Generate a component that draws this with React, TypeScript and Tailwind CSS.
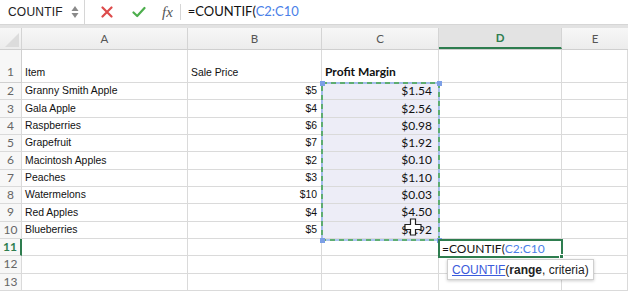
import React from 'react';

const arial = { fontFamily: '"Liberation Sans", Arial, sans-serif' };
const calibri = { fontFamily: 'Lato, "Open Sans", sans-serif' };

const data: [string, string, string][] = [
  ['Granny Smith Apple', '$5', '$1.54'],
  ['Gala Apple', '$4', '$2.56'],
  ['Raspberries', '$6', '$0.98'],
  ['Grapefruit', '$7', '$1.92'],
  ['Macintosh Apples', '$2', '$0.10'],
  ['Peaches', '$3', '$1.10'],
  ['Watermelons', '$10', '$0.03'],
  ['Red Apples', '$4', '$4.50'],
  ['Blueberries', '$5', '$3.92'],
];

const cell = 'h-full shrink-0 border-r border-b border-[#dadada] flex items-center';

function FormulaBar() {
  return (
    <div className="h-[25px] flex items-center bg-white border-b border-[#d6d6d6]">
      <div className="w-[85px] h-full shrink-0 flex items-center border-r border-[#d6d6d6] pl-[8px]">
        <span className="text-[12px] text-[#222] tracking-[0.2px]" style={arial}>COUNTIF</span>
        <svg className="ml-auto mr-[5px] shrink-0" width="8" height="14" viewBox="0 0 8 14">
          <path d="M4 1 L7.5 6 L0.5 6 Z" fill="#8a8a8a" />
          <path d="M4 13 L7.5 8 L0.5 8 Z" fill="#8a8a8a" />
        </svg>
      </div>
      <div className="flex items-center pl-[16px]">
        <svg className="shrink-0" width="12" height="12" viewBox="0 0 12 12">
          <path d="M1.5 1.5 L10.5 10.5 M10.5 1.5 L1.5 10.5" stroke="#dd4b4b" strokeWidth="2.2" strokeLinecap="round" />
        </svg>
        <svg className="ml-[19px] shrink-0" width="14" height="12" viewBox="0 0 14 12">
          <path d="M1.5 6.5 L5.2 10 L12.5 2" stroke="#4cae4c" strokeWidth="2.2" fill="none" strokeLinecap="round" strokeLinejoin="round" />
        </svg>
        <span className="ml-[16px] text-[15px] italic text-[#555]" style={{ fontFamily: '"Liberation Serif", serif' }}>fx</span>
        <div className="ml-[7px] w-px h-[16px] bg-[#d6d6d6]" />
        <span className="ml-[7px] text-[13px] text-[#111]" style={calibri}>
          =COUNTIF(<span className="text-[#4a7fe8]">C2:C10</span>
        </span>
      </div>
    </div>
  );
}

function Header() {
  const cols = [
    { l: 'A', w: 'w-[166px]' },
    { l: 'B', w: 'w-[134px]' },
    { l: 'C', w: 'w-[117px]' },
  ];
  return (
    <div className="h-[22px] flex bg-gradient-to-b from-[#f7f7f7] to-[#ececec] border-b border-[#cfcfcf] text-[11.5px] text-[#555]" style={calibri}>
      <div className="w-[22px] h-full shrink-0 border-r border-[#d4d4d4] relative">
        <svg className="absolute right-[2px] bottom-[2px]" width="14" height="14" viewBox="0 0 14 14">
          <path d="M14 0 L14 14 L0 14 Z" fill="#dcdcdc" />
        </svg>
      </div>
      {cols.map((c) => (
        <div key={c.l} className={`${c.w} h-full shrink-0 border-r border-[#d4d4d4] flex items-center justify-center`}>
          {c.l}
        </div>
      ))}
      <div className="w-[123px] h-full shrink-0 border-r border-[#d4d4d4] border-b-2 border-b-[#2e7d4f] bg-[#e3e3e3] flex items-center justify-center text-[#2e7d4f] font-bold">
        D
      </div>
      <div className="flex-1 h-full flex items-center justify-center">E</div>
    </div>
  );
}

function RowNum({ n, active }: { n: number; active?: boolean }) {
  return (
    <div
      className={`w-[22px] h-full shrink-0 border-b border-[#dadada] flex items-center justify-center bg-[#f7f7f7] text-[12px] ${
        active ? 'border-r-2 border-r-[#2e7d4f] text-[#2e7d4f] font-bold' : 'border-r border-[#d0d0d0] text-[#666]'
      }`}
      style={calibri}
    >
      {n}
    </div>
  );
}

export default function App() {
  return (
    <div className="w-[628px] h-[294px] relative overflow-hidden bg-white">
      <FormulaBar />
      <div className="h-[3px] bg-[#e2e2e2]" />
      <Header />

      {/* Row 1 (tall) */}
      <div className="h-[33px] flex items-end">
        <div className="w-[22px] h-full shrink-0 border-r border-b border-[#d0d0d0] bg-[#f7f7f7] flex items-end justify-center pb-[1px] text-[12px] text-[#666]" style={calibri}>1</div>
        <div className={`${cell} w-[166px] items-end pl-[3px] pb-[1px] text-[10.4px] text-[#111]`} style={arial}>Item</div>
        <div className={`${cell} w-[134px] items-end pl-[3px] pb-[1px] text-[10.4px] text-[#111]`} style={arial}>Sale Price</div>
        <div className={`${cell} w-[117px] items-end pl-[3px] pb-[1px] text-[12px] font-bold text-[#111]`} style={calibri}>Profit Margin</div>
        <div className={`${cell} w-[123px]`} />
        <div className={`${cell} flex-1`} />
      </div>

      {data.map((r, i) => (
        <div key={r[0]} className="h-[17.33px] flex">
          <RowNum n={i + 2} />
          <div className={`${cell} w-[166px] pl-[3px] text-[10.4px] text-[#111]`} style={arial}>{r[0]}</div>
          <div className={`${cell} w-[134px] justify-end pr-[4px] text-[10.4px] text-[#111]`} style={arial}>{r[1]}</div>
          <div className={`${cell} w-[117px] justify-end pr-[6px] text-[12px] text-[#111] bg-[#ededf7]`} style={calibri}>{r[2]}</div>
          <div className={`${cell} w-[123px]`} />
          <div className={`${cell} flex-1`} />
        </div>
      ))}

      {[11, 12, 13].map((n) => (
        <div key={n} className="h-[17.33px] flex">
          <RowNum n={n} active={n === 11} />
          <div className={`${cell} w-[166px]`} />
          <div className={`${cell} w-[134px]`} />
          <div className={`${cell} w-[117px]`} />
          <div className={`${cell} w-[123px]`} />
          <div className={`${cell} flex-1`} />
        </div>
      ))}

      {/* Copy range marquee C2:C10 */}
      <svg className="absolute left-[320px] top-[81px]" width="122" height="162" viewBox="0 0 122 162">
        <rect x="2" y="2" width="117" height="157" fill="none" stroke="#8fb0ec" strokeWidth="1.5" />
        <rect x="2" y="2" width="117" height="157" fill="none" stroke="#47a84a" strokeWidth="1.5" strokeDasharray="5 4" />
        <rect x="0" y="0" width="5" height="5" fill="#7c9fe6" />
        <rect x="117" y="0" width="5" height="5" fill="#7c9fe6" />
        <rect x="0" y="157" width="5" height="5" fill="#7c9fe6" />
        <rect x="117" y="157" width="5" height="5" fill="#7c9fe6" />
      </svg>

      {/* Active cell D11 */}
      <div className="absolute left-[438px] top-[239px] w-[125px] h-[19px] border-2 border-[#2e7d4f] bg-white flex items-center pl-[2px] text-[12px] text-[#111]" style={calibri}>
        =COUNTIF(<span className="text-[#4a7fe8]">C2:C10</span>
        <div className="absolute right-[-3px] bottom-[-3px] w-[5px] h-[5px] bg-[#2e7d4f] border border-white" />
      </div>

      {/* Function tooltip */}
      <div className="absolute left-[447px] top-[259px] h-[21px] px-[4px] flex items-center bg-white border border-[#cfcfcf] shadow-[0_1px_3px_rgba(0,0,0,0.2)] text-[12px] text-[#222]" style={arial}>
        <span className="text-[#3b5bdb] underline">COUNTIF</span>(<span className="font-bold">range</span>, criteria)
      </div>

      {/* Cursor */}
      <svg className="absolute left-[404px] top-[218px]" width="18" height="18" viewBox="0 0 18 18">
        <path d="M6.5 1 H11.5 V6.5 H17 V11.5 H11.5 V17 H6.5 V11.5 H1 V6.5 H6.5 Z" fill="white" stroke="#222" strokeWidth="1.2" />
      </svg>
    </div>
  );
}
